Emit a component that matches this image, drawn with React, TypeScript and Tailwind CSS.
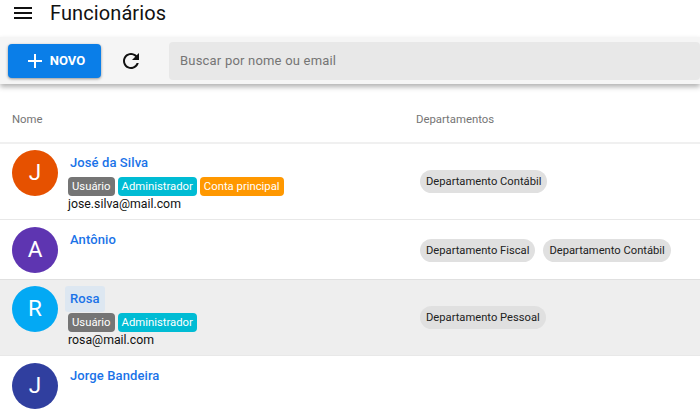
const MenuIcon = () => (
  <svg viewBox="0 0 24 24" className="h-6 w-6 fill-[#111]">
    <path d="M3 18h18v-2H3v2zm0-5h18v-2H3v2zm0-7v2h18V6H3z" />
  </svg>
)

const AddIcon = () => (
  <svg viewBox="0 0 24 24" className="h-6 w-6 fill-white">
    <path d="M19 13h-6v6h-2v-6H5v-2h6V5h2v6h6v2z" />
  </svg>
)

const RefreshIcon = () => (
  <svg viewBox="0 0 24 24" className="h-6 w-6 fill-[#111]">
    <path d="M17.65 6.35C16.2 4.9 14.21 4 12 4c-4.42 0-7.99 3.58-7.99 8s3.57 8 7.99 8c3.73 0 6.84-2.55 7.73-6h-2.08c-.82 2.33-3.04 4-5.65 4-3.31 0-6-2.69-6-6s2.69-6 6-6c1.66 0 3.14.69 4.22 1.78L13 11h7V4l-2.35 2.35z" />
  </svg>
)

const Tag = ({ label, className }: { label: string; className: string }) => (
  <span className={`h-[19px] rounded-[4px] px-1 text-[11.3px] leading-[19px] text-white ${className}`}>{label}</span>
)

const Dept = ({ label }: { label: string }) => (
  <span className="h-[23px] rounded-full bg-[#e0e0e0] px-[6px] text-[11.2px] leading-[23px] text-[#222]">{label}</span>
)

type Employee = {
  name: string
  initial: string
  color: string
  email?: string
  roles: string[]
  depts: string[]
  height: string
  hover?: boolean
}

const employees: Employee[] = [
  {
    name: "José da Silva",
    initial: "J",
    color: "bg-[#e65100]",
    email: "jose.silva@mail.com",
    roles: ["Usuário", "Administrador", "Conta principal"],
    depts: ["Departamento Contábil"],
    height: "h-[76px] pt-[6px] border-b border-[#e8e8e8]",
  },
  {
    name: "Antônio",
    initial: "A",
    color: "bg-[#5e35b1]",
    roles: [],
    depts: ["Departamento Fiscal", "Departamento Contábil"],
    height: "h-[60px] pt-[7px] border-b border-[#e0e0e0]",
  },
  {
    name: "Rosa",
    initial: "R",
    color: "bg-[#03a9f4]",
    email: "rosa@mail.com",
    roles: ["Usuário", "Administrador"],
    depts: ["Departamento Pessoal"],
    height: "h-[76px] pt-[6px] border-b border-[#e8e8e8]",
    hover: true,
  },
  {
    name: "Jorge Bandeira",
    initial: "J",
    color: "bg-[#303f9f]",
    roles: [],
    depts: [],
    height: "h-[59px] pt-[7px]",
  },
]

const roleColor: Record<string, string> = {
  "Usuário": "bg-[#757575]",
  "Administrador": "bg-[#00bcd4]",
  "Conta principal": "bg-[#ff9800]",
}

const Row = ({ employee }: { employee: Employee }) => (
  <div className={`flex ${employee.height} ${employee.hover ? "bg-[#eeeeee]" : "bg-white"}`}>
    <div className="flex w-[408px] shrink-0 items-start pl-3">
      <div className={`flex h-[46px] w-[46px] shrink-0 items-center justify-center rounded-full text-[22.5px] text-white ${employee.color}`}>
        {employee.initial}
      </div>
      <div className="ml-[10px] flex flex-col">
        <div className="-ml-[3px] h-[26px]">
          <span className={`inline-block h-[26px] rounded-[3px] px-[5px] text-[13px] font-medium leading-[25px] tracking-[0.1px] text-[#1a73e8] ${employee.hover ? "bg-[#dde7f1]" : ""}`}>
            {employee.name}
          </span>
        </div>
        {employee.roles.length > 0 && (
          <div className="mt-[1px] flex gap-[3px]">
            {employee.roles.map((role) => (
              <Tag key={role} label={role} className={roleColor[role]} />
            ))}
          </div>
        )}
        {employee.email && <div className="text-[12.3px] leading-[16px] text-[#111]">{employee.email}</div>}
      </div>
    </div>
    <div className="-mt-[6px] flex flex-1 items-center gap-2 pl-[12px]">
      {employee.depts.map((dept) => (
        <Dept key={dept} label={dept} />
      ))}
    </div>
  </div>
)

export default function App() {
  return (
    <div className="h-[415px] w-[700px] overflow-hidden bg-white font-['Roboto',sans-serif]">
      <div className="flex h-[37px] items-center pb-[12px] pl-[11px]">
        <MenuIcon />
        <h1 className="ml-[15px] text-[20px] leading-[28px] tracking-[0.1px] text-[#111]">Funcionários</h1>
      </div>

      <div className="relative flex h-[47px] items-center bg-[#f5f5f5] pl-2 shadow-[0_3px_5px_rgba(0,0,0,0.3)]">
        <button className="flex h-[34px] w-[93px] items-center justify-center gap-[3px] rounded-[4px] bg-[#0a7ee8] pr-[1px] text-[13px] font-bold text-white shadow-[0_1px_3px_rgba(0,0,0,0.4)]">
          <AddIcon />
          NOVO
        </button>
        <div className="ml-[18px] flex w-6 items-center justify-center">
          <RefreshIcon />
        </div>
        <div className="ml-[26px] flex h-[38px] flex-1 items-center rounded-[4px] bg-[#e8e8e8] pl-[11px] text-[13px] tracking-[0.2px] text-[#757575]">
          Buscar por nome ou email
        </div>
      </div>

      <div className="flex h-[60px] items-center border-b-2 border-[#f0f0f0] pt-[13px] text-[11.35px] text-[#757575]">
        <div className="w-[416px] pl-3">Nome</div>
        <div>Departamentos</div>
      </div>

      {employees.map((employee) => (
        <Row key={employee.name} employee={employee} />
      ))}
    </div>
  )
}
